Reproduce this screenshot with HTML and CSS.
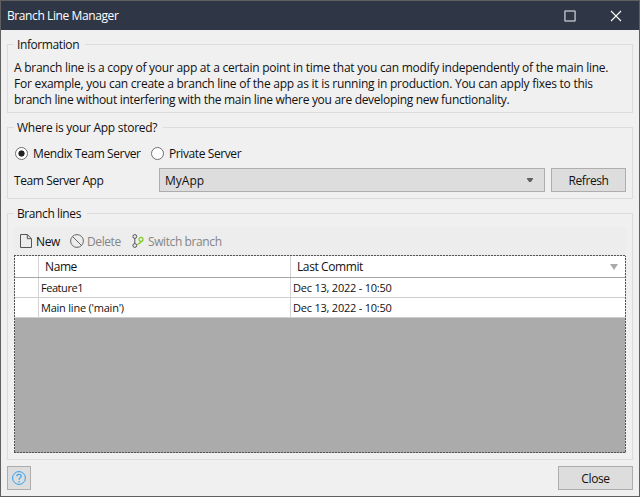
FILE: index.html
```html
<!DOCTYPE html>
<html lang="en">
<head>
<meta charset="utf-8">
<title>Branch Line Manager</title>
<link rel="stylesheet" href="styles.css">
</head>
<body>
<div class="window">
  <header class="titlebar">
    <span class="title">Branch Line Manager</span>
    <svg class="win-icon" width="12" height="12" viewBox="0 0 12 12"><rect x=".9" y=".9" width="10.2" height="10.2" rx=".6" fill="none" stroke="#b4b7be" stroke-width="1.5"/></svg>
    <svg class="win-icon close-icon" width="12" height="12" viewBox="0 0 12 12"><path d="M1 1l10 10M11 1L1 11" stroke="#fff" stroke-width="1.1"/></svg>
  </header>
  <main class="content">
    <fieldset class="group info">
      <legend class="lg-info">Information</legend>
      <p class="l1">A branch line is a copy of your app at a certain point in time that you can modify independently of the main line.</p>
      <p class="l2">For example, you can create a branch line of the app as it is running in production. You can apply fixes to this</p>
      <p class="l3">branch line without interfering with the main line where you are developing new functionality.</p>
    </fieldset>
    <fieldset class="group store">
      <legend class="lg-store">Where is your App stored?</legend>
      <div class="radios">
        <span class="radio checked"></span><span class="radio-label first">Mendix Team Server</span>
        <span class="radio"></span><span class="radio-label">Private Server</span>
      </div>
      <div class="app-row">
        <span class="app-label">Team Server App</span>
        <div class="combo"><span>MyApp</span><svg width="6" height="4" viewBox="0 0 6 4"><path d="M0 0h6v1L3.8 4H2.2L0 1z" fill="#606060"/></svg></div>
        <button class="btn">Refresh</button>
      </div>
    </fieldset>
    <fieldset class="group branches">
      <legend class="lg-branches">Branch lines</legend>
      <div class="toolbar">
        <svg class="ic-new" width="12" height="14" viewBox="0 0 12 14"><path d="M.5.5h6.8l4.2 4.2v8.8H.5zM7.3.5v4.2h4.2" fill="none" stroke="#555" stroke-width="1"/></svg>
        <span class="tool t-new">New</span>
        <svg class="ic-del" width="14" height="14" viewBox="0 0 14 14"><circle cx="7" cy="7" r="6.4" fill="none" stroke="#666"/><path d="M2.5 2.5l9 9" stroke="#666"/></svg>
        <span class="tool off t-del">Delete</span>
        <svg class="ic-br" width="12" height="14" viewBox="0 0 12 14" fill="none"><path d="M2.8 4.5v5" stroke="#505050"/><circle cx="2.8" cy="2.5" r="1.9" stroke="#505050"/><circle cx="2.8" cy="11.5" r="1.9" stroke="#505050"/><circle cx="9" cy="5.4" r="2" stroke="#7ccb20" stroke-width="1.2"/><path d="M9 7.6C8.8 9.3 7 9 5.4 10.6" stroke="#7ccb20" stroke-width="1.3"/></svg>
        <span class="tool off t-sw">Switch branch</span>
      </div>
      <div class="grid-frame">
        <div class="grid">
          <div class="row head"><span></span><span>Name</span><span>Last Commit<svg width="8" height="6" viewBox="0 0 8 6"><path d="M0 0h8L4 6z" fill="#a9a9a9"/></svg></span></div>
          <div class="row"><span></span><span class="c-feat">Feature1</span><span class="c-date">Dec 13, 2022 - 10:50</span></div>
          <div class="row"><span></span><span class="c-main">Main line ('main')</span><span class="c-date">Dec 13, 2022 - 10:50</span></div>
        </div>
      </div>
    </fieldset>
    <footer class="footer">
      <button class="btn help" aria-label="Help"><svg width="14" height="14" viewBox="0 0 14 14" fill="none"><circle cx="7" cy="7" r="6.4" stroke="#2f9df0"/><path d="M4.8 5.2C4.8 2.7 9.2 2.7 9.2 5.2 9.2 6.8 7 6.8 7 8.8M7 10v1.6" stroke="#3fa5f2" stroke-width="1.3"/></svg></button>
      <button class="btn close">Close</button>
    </footer>
  </main>
</div>
</body>
</html>
```

FILE: styles.css
```css
* { box-sizing: border-box; }
body { margin: 0; font: 12px/16px "Open Sans", "Noto Sans", sans-serif; color: #111; letter-spacing: -.4px; }
.window { width: 640px; height: 497px; border: 1px solid #606060; background: #f0f0f0; display: flex; flex-direction: column; }
.titlebar { height: 29px; background: #2f3747; color: #fff; display: flex; align-items: center; padding: 0 17px 0 6px; }
.title { flex: 1; padding-top: 1px; }
.close-icon { margin-left: 34px; }
.content { flex: 1; padding: 6px; display: flex; flex-direction: column; }
.group { margin: 0; border: 1px solid #dcdcdc; padding: 0 6px; min-width: 0; white-space: nowrap; }
.group legend { height: 17px; line-height: 18px; padding: 0 6px 0 3px; }
.info { height: 77px; }
.info p { margin: 0; height: 16px; letter-spacing: -.255px; }
.info .l1 { margin-top: 7px; }
.info .l3 { letter-spacing: -.3px; }
.lg-store { letter-spacing: -.28px; }
.store { height: 80px; margin-top: 6px; }
.radios { display: flex; align-items: center; height: 16px; margin-top: 9px; }
.radio { width: 13px; height: 13px; border: 1px solid #707070; border-radius: 50%; background: #fff; flex: none; margin-left: 1px; }
.checked { background: radial-gradient(circle, #222 0 2.8px, #fff 3.4px); }
.radio-label { margin-left: 5px; padding-top: 1px; }
.radio-label.first { width: 117px; }
.app-row { display: flex; align-items: center; margin-top: 7px; }
.app-label { width: 145px; padding-top: 2px; }
.combo { width: 386px; height: 24px; border: 1px solid #adadad; background: #ddd; display: flex; align-items: center; justify-content: space-between; padding: 0 11px 0 5px; margin-right: 6px; letter-spacing: 0; }
.combo span { padding-top: 2px; }
.btn { width: 75px; height: 24px; border: 1px solid #adadad; background: #ddd; font: inherit; letter-spacing: inherit; color: inherit; padding: 2px 0 0; display: flex; align-items: center; justify-content: center; }
.branches { height: 255px; margin-top: 6px; }
.toolbar { height: 28px; margin-top: 5px; background: #ededed; display: flex; align-items: center; padding-left: 6px; }
.toolbar svg { flex: none; }
.tool { padding-top: 2px; }
.t-new { width: 34px; margin-left: 4px; }
.off { color: #858585; }
.t-del { width: 45px; margin-left: 3px; }
.t-sw { margin-left: 4px; }
.grid-frame { height: 198px; padding: 1px; background: linear-gradient(#ababab, #ababab) 1px 1px / 610px 196px no-repeat, repeating-linear-gradient(90deg, #555 0 2px, #ddd 2px 3px) 0 0 / 100% 1px no-repeat, repeating-linear-gradient(90deg, #555 0 2px, #ababab 2px 3px) 0 100% / 100% 1px no-repeat, repeating-linear-gradient(#555 0 2px, #ddd 2px 3px); }
.row { display: grid; grid-template-columns: 24px 252px 1fr; height: 20px; background: #fff; border-bottom: 1px solid #cecece; font-size: 11px; letter-spacing: -.22px; }
.row span { padding-left: 2px; border-right: 1px solid #d3d3d3; line-height: 20px; }
.row span:last-child { border-right: 0; }
.row .c-feat { letter-spacing: -.45px; }
.head { height: 22px; border-bottom-color: #a6a6a6; font-size: 12px; letter-spacing: -.4px; }
.head span { padding-left: 6px; line-height: 21px; display: flex; align-items: center; justify-content: space-between; padding-right: 7px; }
.footer { margin-top: 6px; display: flex; justify-content: space-between; }
.help { width: 24px; padding: 0; }
```
